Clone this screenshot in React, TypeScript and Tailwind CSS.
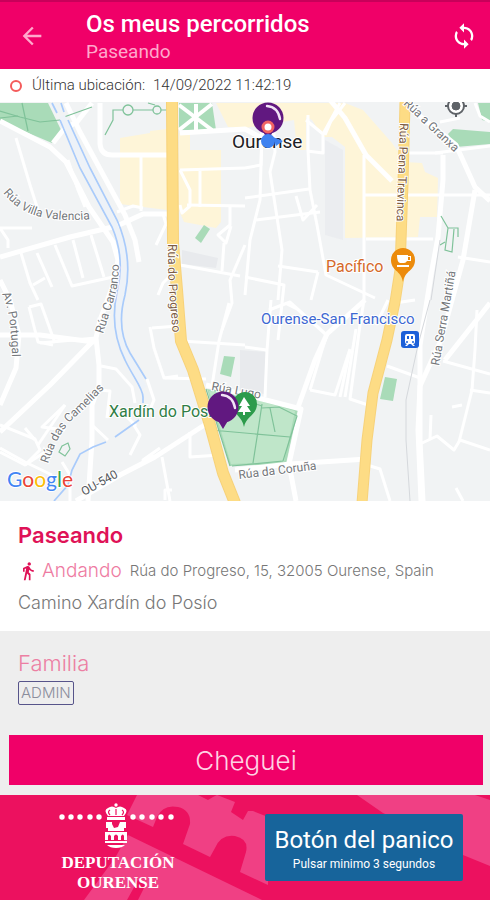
import React from 'react';
import { MdArrowBack, MdDirectionsWalk, MdSync } from 'react-icons/md';

const parks = [
  'M0 103H48L62 132L52 143L0 121Z',
  'M179 103H212L216 130L179 130Z',
  'M195 238L204 225L210 229L201 243Z',
  'M224 356L235 357L231 377L220 374Z',
  'M385 377L397 379L393 401L380 399Z',
  'M478 103H490V122L482 120Z',
  'M448 134L453 129L490 132V144L456 147Z',
  'M207 389L262 399L298 409L286 464L230 466Z',
];

const blocks = [
  'M120 138L150 133V131L167 129V210L143 207L120 204Z',
  'M179 133H190V150H221V222L216 228L184 222L178 208Z',
  'M216 103H345L363 110L392 143L405 162L422 163L425 172L438 178L437 217H420L418 237L345 238V147L332 137H323L312 120L306 117V150L297 150L294 120L245 128L228 127Z',
];

const wideRoads = [
  'M0 121L50 147L66 162L89 207L113 242L118 260L113 285L100 320L96 338L99 365V385L92 405V440L88 501',
  'M0 257L70 237L117 226L143 214L167 214',
  'M66 103L80 132L125 215L135 240L139 262',
  'M53 143L64 129L77 122L92 103',
  'M0 432L50 385L94 340',
  'M0 335L40 335L94 342',
  'M0 280L10 300L19 335L16 368L0 405',
  'M76 501L120 475L155 457L206 424',
  'M100 103V144Q101 155 112 155H167',
  'M180 133L245 129L275 145',
  'M330 100L345 118L366 155L392 181',
  'M400 100L456 145L475 187L490 201',
  'M443 155V180L438 237L431 275L420 345V440L423 501',
  'M475 190L463 260L452 300L441 340L420 386L418 430L421 501',
  'M490 303L445 360',
  'M206 385L262 399L301 409L289 464L296 501',
  'M297 410L315 360L327 334L365 300',
  'M235 470L290 464L367 459',
];

const roads = [
  'M16 138L30 185L38 210', 'M68 160L78 190L85 207', 'M0 228H32', 'M0 228L8 240V248',
  'M21 253L30 283L38 300', 'M37 253L52 287', 'M55 245L72 286L113 277', 'M73 240L83 278', 'M91 235L104 277', 'M33 285L45 278',
  'M141 155V211', 'M117 212L133 206L143 208', 'M163 214L166 224L156 245',
  'M180 170L245 168', 'M200 171V207', 'M180 170L190 190V206L182 213L180 205', 'M187 205L245 206',
  'M230 207V225L218 235L226 243L231 226', 'M224 243L222 271', 'M180 265L240 276', 'M245 245L230 280L232 303L222 330',
  'M158 295L163 283L170 276', 'M29 307L38 342L53 345', 'M29 307L41 304L55 343', 'M40 343L96 338',
  'M245 168L261 165L262 128', 'M273 120L275 152L270 172L282 250L278 300', 'M308 115V150L310 190L317 225L326 275L375 298',
  'M262 130L260 200L250 240L245 295', 'M245 198L309 189', 'M256 220L320 212', 'M296 196L303 220L317 205', 'M278 266L318 272', 'M245 277L284 285L278 340', 'M318 272L311 300',
  'M306 120L323 134V153L307 151', 'M323 134L340 103', 'M325 135L331 121L345 103',
  'M364 155V300L360 325L350 399L368 405',
  'M365 195H490', 'M366 239H433', 'M408 153H443', 'M458 257L490 262', 'M435 153L490 146',
  'M181 341L245 345', 'M152 328L178 326L179 341', 'M150 327L154 348L164 378L178 376', 'M229 303L219 341L212 386',
  'M101 366L116 369L132 387L135 403', 'M147 379L154 400L149 412L142 417', 'M100 390L110 391L107 418', 'M92 425L108 440',
  'M132 422L140 435L130 455', 'M136 426L125 415', 'M165 378L206 379', 'M190 432V457L220 455', 'M162 457L170 501', 'M155 456L143 460L160 448',
  'M0 425L35 439L40 450L25 465L0 452', 'M38 445L65 405', 'M0 448L25 462L52 475', 'M25 428L35 440', 'M65 405L42 427L65 430', 'M25 465L45 452', 'M165 500V490L172 490',
  'M245 347L267 350', 'M271 300L267 350L265 397', 'M269 310L290 302L327 335L322 350L310 390', 'M285 303L297 309L325 334',
  'M310 390L335 395L350 349', 'M345 397L356 329', 'M340 397L350 350', 'M387 366L423 379',
  'M443 361L490 374', 'M477 310L475 350L472 390L459 442', 'M470 390L490 393', 'M452 407L462 405', 'M420 444L437 436L454 450L460 440L490 450', 'M431 415L430 440',
  'M367 465L380 469L390 501', 'M456 488L463 501', 'M395 303L415 300', 'M376 325L388 300', 'M70 501V475L62 462',
];

const minorPaths = [
  'M0 111L20 117L40 122L60 120', 'M22 103L28 131', 'M0 118L18 116', 'M64 117L92 107',
  'M105 135L113 120V110H168', 'M148 103L155 105', 'M441 216L448 228H458V237M448 228L445 250L452 252L454 229M440 245L445 242',
  'M206 389L230 466M211 430L290 437M262 404L258 431L253 463M262 408L279 407L297 416L283 461L232 466M270 408L275 432',
  'M62 446L68 443L70 449L65 456L59 452Z', 'M214 390L262 406',
];

const river = [
  'M52 103L57 113M61 103L64 112',
  'M60 120L80 168L112 227C121 248 123 268 117 292C112 315 114 338 125 360C133 377 143 388 143 397V403',
  'M68 120L90 168L117 220C128 245 130 272 125 295C119 317 121 337 130 353L146 379',
  'M139 420L115 437M106 442L93 447L80 454L72 470L68 485L54 501',
];

function Balloon({ x, y }: { x: number; y: number }) {
  return (
    <g transform={`translate(${x} ${y})`}>
      <path d="M-6 12L0 22L6 12Z" fill="#611880" />
      <circle r="15.5" fill="#611880" />
      <path d="M-1 -12Q10 -11 12 1" fill="none" stroke="#f1e3f6" strokeWidth="2.4" strokeLinecap="round" />
    </g>);

}

function CityMap() {
  return (
    <svg
      viewBox="0 102 490 399"
      role="img"
      aria-label="Mapa de Ourense"
      className="block w-full font-[Roboto,sans-serif]">
      
      <defs>
        <path id="valencia" d="M3 193Q20 214 46 218T100 218" />
        <path id="carranco" d="M103 334L115 296Q120 280 119 244" />
        <path id="portugal" d="M2 294Q12 312 12 366" />
        <path id="progreso" d="M168 244V265Q169 300 175 355" />
        <path id="granxa" d="M403 104L475 172" />
        <path id="camelias" d="M48 464Q58 432 74 418T112 380" />
      </defs>
      <rect y="102" width="490" height="399" fill="#f1f3f4" />
      <g fill="#e8eaed">
        <path d="M182 250L218 258L216 268L182 264Z" />
        <path d="M240 350L266 352L264 394L240 390Z" />
        <path d="M325 140L343 150V240L325 235Z" fillOpacity=".6" />
      </g>
      <g fill="#fef5d8">{blocks.map((d) => <path key={d} d={d} />)}</g>
      <g fill="#a9dbb8">{parks.map((d) => <path key={d} d={d} />)}</g>
      <path d="M209 391L260 401L295 411L284 462L231 464Z" fill="#bfe6c9" />
      <g fill="none" stroke="#fff" strokeLinejoin="round">
        <g strokeWidth="5">{wideRoads.map((d) => <path key={d} d={d} />)}</g>
        <g strokeWidth="3">{roads.map((d) => <path key={d} d={d} />)}</g>
        <path d="M179 105L212 130M179 130L212 104M196 104V131" strokeWidth="4" />
        <path d="M475 103L480 116L490 122M440 122L460 118" strokeWidth="3" />
      </g>
      <g fill="none" stroke="#7fc299" strokeWidth="1.2">
        {minorPaths.map((d) => <path key={d} d={d} />)}
      </g>
      <g fill="#f1f3f4" stroke="#7fc299" strokeWidth="1.3">
        <circle cx="128" cy="110" r="5" />
        <circle cx="157" cy="110" r="4" />
      </g>
      <path d="M430 300L418 345L406 400V440L410 501M440 240L431 300" fill="none" stroke="#d5d8dc" />
      <path d="M62 116L86 168L114 224C125 248 127 268 121 292C116 315 118 338 128 357L144 388" fill="none" stroke="#edf2f8" strokeWidth="6" />
      <g fill="none" stroke="#a9cbfb" strokeWidth="1.7">{river.map((d) => <path key={d} d={d} />)}</g>
      <g fill="none" strokeLinejoin="round">
        <path d="M172 102L173 243L177 290L181 341L193 370L210 425L223 473L235 503" stroke="#f7d27a" strokeWidth="12" />
        <path d="M172 102L173 243L177 290L181 341L193 370L210 425L223 473L235 503" stroke="#fddc85" strokeWidth="10" />
        <path d="M405 102L403 183L400 270L395 302L387 340L373 393L367 440L362 503" stroke="#f7d27a" strokeWidth="11" />
        <path d="M405 102L403 183L400 270L395 302L387 340L373 393L367 440L362 503" stroke="#fddc85" strokeWidth="9" />
      </g>

      <g fill="#74777b" stroke="#fff" strokeWidth="2" paintOrder="stroke" fontSize="12">
        <text><textPath href="#valencia">Rúa Villa Valencia</textPath></text>
        <text><textPath href="#carranco">Rúa Carranco</textPath></text>
        <text><textPath href="#portugal">Av. Portugal</textPath></text>
        <text><textPath href="#camelias">Rúa das Camelias</textPath></text>
        <text><textPath href="#granxa">Rúa a Granxa</textPath></text>
        <text fill="#7d5d45"><textPath href="#progreso">Rúa do Progreso</textPath></text>
        <text fill="#7d5d45" transform="translate(400 123) rotate(92)">Rúa Pena Trevinca</text>
        <text transform="translate(439 366) rotate(-80)">Rúa Serra Martiñá</text>
        <text transform="translate(211 390) rotate(10)">Rúa Lugo</text>
        <text transform="translate(239 479) rotate(-7)">Rúa da Coruña</text>
        <text fill="#55585c" transform="translate(84 496) rotate(-29)">OU-540</text>
      </g>
      <g stroke="#fff" strokeWidth="2" paintOrder="stroke" fontSize="16">
        <text x="326" y="272" fill="#d5692a">Pacífico</text>
        <text x="261" y="324" fill="#3d68d2" fontSize="15">Ourense-San Francisco</text>
        <text x="109" y="417" fill="#2f7d45">Xardín do Posío</text>
        <text x="232" y="148" fill="#202124" fontSize="19">Ourense</text>
      </g>

      <path d="M403 282C401 270 391 271 391 260A12 12 0 0 1 415 260C415 271 405 270 403 282Z" fill="#ec8b0c" />
      <path d="M397 255H408V256H411V261H407Q406 263 404 263H400Q397 262 397 255ZM408 257V260H410V257ZM397 265H409V267H397Z" fill="#fff" />
      <rect x="401" y="331" width="18" height="17" rx="3" fill="#1c60d8" />
      <path d="M407 334H413Q415 334 415 336V342Q415 344 413 344L415 346H413L411 344H409L407 346H405L407 344Q405 344 405 342V336Q405 334 407 334Z" fill="#fff" />
      <path d="M407 336H409V339H407ZM411 336H413V339H411Z" fill="#1c60d8" />
      <circle cx="407" cy="342" r="1" fill="#1c60d8" />
      <circle cx="413" cy="342" r="1" fill="#1c60d8" />
      <g stroke="#5f6368" fill="#fff">
        <circle cx="456" cy="106" r="8" strokeWidth="2" />
        <circle cx="456" cy="106" r="4" fill="#5f6368" />
        <path d="M445 106H448M464 106H467M456 114V117" strokeWidth="2" />
      </g>
      <path d="M244 427C242 416 233 415 233 404A12 12 0 0 1 257 404C257 415 246 416 244 427Z" fill="#2c9b4b" />
      <path d="M244 397L250 406H247L251 412H245V415H243V412H238L242 406H239Z" fill="#fff" />
      <Balloon x={268} y={118} />
      <Balloon x={223} y={407} />
      <circle cx="268" cy="127" r="5" fill="#fff" stroke="#f06464" strokeWidth="3" />
      <circle cx="268" cy="141" r="7" fill="#3f82f0" />
      <path d="M273 137L283 141L276 146Z" fill="#3f82f0" />

      <text x="7" y="487" fontSize="21" fontFamily="Lato, sans-serif" stroke="#fff" strokeWidth="2" paintOrder="stroke">
        <tspan fill="#4285f4">G</tspan>
        <tspan fill="#ea4335">o</tspan>
        <tspan fill="#fbbc05">o</tspan>
        <tspan fill="#4285f4">g</tspan>
        <tspan fill="#34a853">l</tspan>
        <tspan fill="#ea4335">e</tspan>
      </text>
    </svg>);

}

function CastlePattern() {
  return (
    <svg
      viewBox="0 795 490 105"
      preserveAspectRatio="xMidYMid slice"
      aria-hidden="true"
      className="absolute inset-0 h-full w-full">
      
      <g fill="#f04084">
        <path d="M137 795H198L208 800L213 797L217 795L235 802L231 812L243 820L248 811L253 811L268 817V885L240 872L246 852Q249 839 235 836Q221 834 215 848L210 857L183 844L190 824Q191 810 178 807Q163 804 157 817L153 827L127 815Z" />
        <path d="M128 835L262 900H138L146 884L138 880L127 900H84L115 858Z" />
        <path d="M357 795H475L490 800V866L463 855L420 830L383 813Z" />
      </g>
    </svg>);

}

function Emblem() {
  return (
    <svg viewBox="0 0 120 46" className="h-[46px] w-[120px]" aria-hidden="true">
      <g fill="#fff">
        {[4, 13, 22, 32, 41, 75, 84, 94, 103, 113].map((cx) =>
        <circle key={cx} cx={cx} cy="14" r="2.7" />
        )}
        <circle cx="58" cy="2" r="1.7" />
        <path d="M50 13Q45 7 50 5Q54 2 58 5Q62 2 66 5Q71 7 66 13Z" />
        <path d="M49 14H67V17H49Z" />
        <path d="M48 19H54V21L56 25L60 24L62 19H68V25H66V28H50V25H48Z" />
        <path d="M47 29H69V37H66V33Q65 30 63 33V37H60V33Q58 30 56 33V37H53V33Q51 30 50 33V37H47Z" />
        <path d="M47 38H69V40H47ZM49 42H67Q64 45 58 45T49 42Z" />
      </g>
      <path d="M52 12Q49 9 52 7M58 12V6M64 12Q67 9 64 7" fill="none" stroke="#ec115f" strokeWidth="1.2" />
    </svg>);

}

export default function App() {
  return (
    <div className="flex min-h-screen flex-col bg-white font-[Roboto,sans-serif]">
      <header className="flex h-[69px] items-center border-t-2 border-[#c8005a] bg-[#f00068] pl-[18px] pr-3">
        <button aria-label="Volver" className="text-[#ffa8cc]">
          <MdArrowBack className="h-7 w-7" />
        </button>
        <div className="ml-10 flex-1">
          <h1 className="pt-1 text-2xl leading-7 font-medium text-white">Os meus percorridos</h1>
          <p className="text-[19px] leading-7 text-[#ffa8cc]">Paseando</p>
        </div>
        <button aria-label="Actualizar" className="text-white">
          <MdSync className="h-7 w-7" />
        </button>
      </header>

      <div className="flex h-[33px] items-center gap-2 pl-2.5 text-[15px] font-light text-[#333]">
        <span className="mr-0.5 h-3 w-3 rounded-full border-2 border-[#f45b5b]"></span>
        <span>Última ubicación:</span>
        <time>14/09/2022 11:42:19</time>
      </div>

      <CityMap />

      <section className="h-[130px] px-[18px] pt-[18px] font-[Inter,sans-serif] font-light text-[#777]">
        <h2 className="text-[22px] leading-8 font-semibold text-[#df1257]">Paseando</h2>
        <div className="mt-1 flex h-8 items-center">
          <MdDirectionsWalk className="h-5 w-5 text-[#df1257]" />
          <span className="ml-1 text-[19px] text-[#ee7ba2]">Andando</span>
          <span className="ml-2 text-[15px]">Rúa do Progreso, 15, 32005 Ourense, Spain</span>
        </div>
        <p className="text-lg leading-8">Camino Xardín do Posío</p>
      </section>

      <section className="flex flex-1 flex-col items-start bg-[#eee] pt-[18px] pr-[7px] pb-2.5 pl-[9px] font-[Inter,sans-serif] font-light">
        <h3 className="ml-[9px] text-[22px] leading-7 text-[#ec7fa3]">Familia</h3>
        <span className="mt-1 ml-[9px] rounded-xs border border-[#57548a] px-0.5 text-[15px] leading-[22px] text-[#8b8d9c]">ADMIN</span>
        <button className="mt-auto h-[50px] w-full bg-[#f00068] text-[26px] text-[#ffd3e4]">Cheguei</button>
      </section>

      <footer className="relative h-[105px] bg-[#ec115f]">
        <CastlePattern />
        <div className="relative flex h-full items-center justify-between pr-[27px] pl-[58px]">
          <div className="flex flex-col items-center font-['Liberation_Serif',serif] text-[17px] leading-5 font-bold text-white">
            <Emblem />
            <span className="mt-1">DEPUTACIÓN</span>
            <span>OURENSE</span>
          </div>
          <button className="h-[67px] w-[198px] rounded-xs bg-[#17649b] text-white">
            <span className="block text-2xl leading-8">Botón del panico</span>
            <span className="block text-xs">Pulsar minimo 3 segundos</span>
          </button>
        </div>
      </footer>
    </div>);

}
